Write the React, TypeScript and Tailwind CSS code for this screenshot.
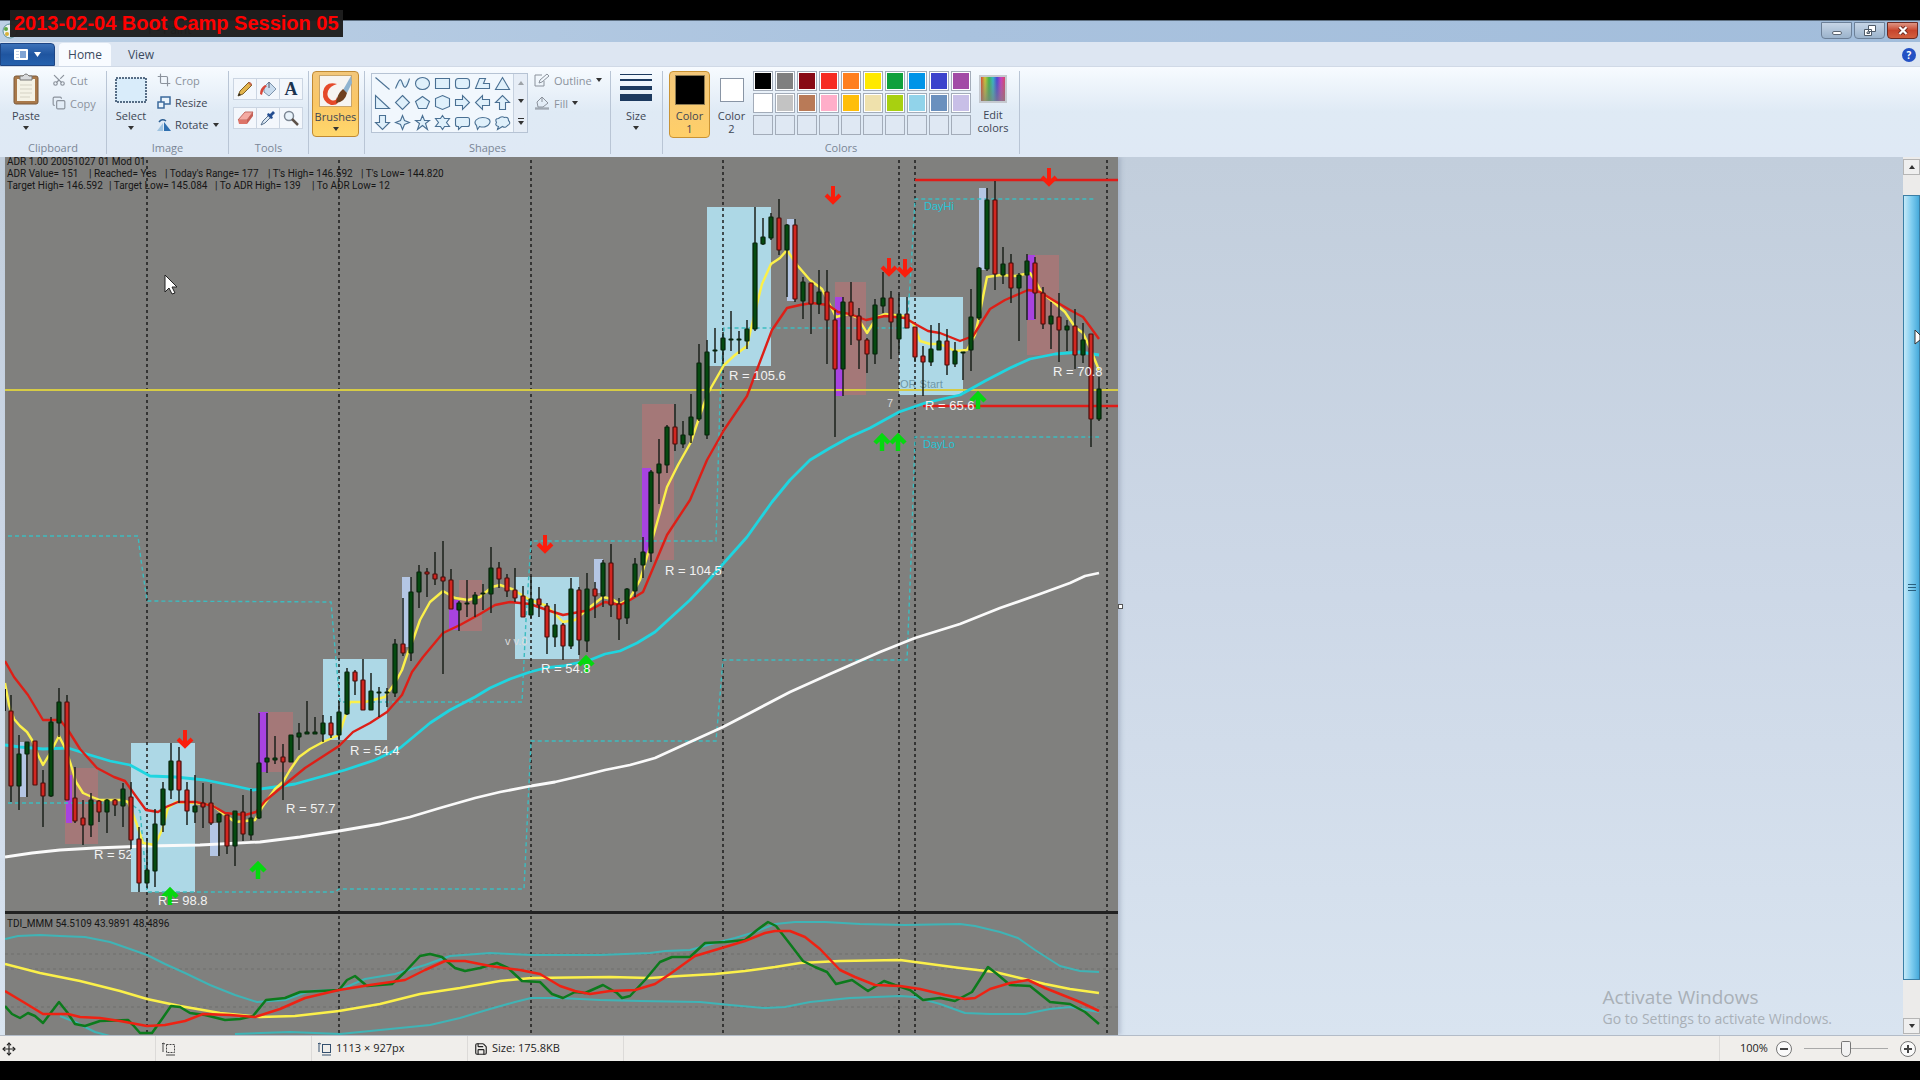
import type { ReactNode } from 'react';
import { Copy, Crop, Move, Save, Scissors } from 'lucide-react';

// [high, top, bottom, low, colour], one candle every 8px starting at x = 11
type Candle = [number, number, number, number, 'g' | 'r'];

const CANDLES: Candle[] = [
  [695, 711, 786, 802, 'r'], [735, 754, 786, 810, 'g'], [742, 742, 754, 797, 'g'], [741, 741, 785, 785, 'r'],
  [770, 783, 796, 827, 'r'], [717, 722, 796, 797, 'g'], [688, 702, 723, 737, 'g'], [695, 702, 800, 800, 'r'],
  [767, 798, 821, 823, 'r'], [800, 818, 825, 845, 'r'], [793, 800, 825, 837, 'g'], [800, 801, 812, 822, 'r'],
  [799, 800, 812, 833, 'g'], [799, 800, 805, 816, 'r'], [783, 789, 806, 827, 'g'], [782, 797, 840, 849, 'r'],
  [827, 839, 883, 892, 'r'], [838, 870, 883, 888, 'g'], [809, 824, 871, 887, 'g'], [782, 789, 825, 832, 'g'],
  [743, 761, 790, 799, 'g'], [747, 761, 790, 803, 'r'], [782, 790, 811, 825, 'r'], [775, 806, 812, 823, 'g'],
  [783, 803, 807, 828, 'r'], [784, 803, 823, 825, 'r'], [813, 814, 822, 856, 'g'], [815, 815, 846, 854, 'r'],
  [811, 811, 846, 866, 'g'], [795, 812, 834, 841, 'r'], [789, 818, 835, 840, 'g'], [713, 763, 818, 819, 'g'],
  [713, 758, 762, 773, 'g'], [736, 758, 760, 764, 'g'], [744, 757, 762, 800, 'r'], [735, 735, 762, 762, 'g'],
  [723, 733, 737, 750, 'g'], [701, 732, 734, 734, 'g'], [717, 732, 734, 734, 'g'], [715, 723, 734, 742, 'g'],
  [716, 723, 735, 738, 'r'], [701, 712, 735, 740, 'g'], [668, 672, 714, 715, 'g'], [670, 672, 681, 695, 'r'],
  [659, 680, 710, 710, 'r'], [673, 691, 710, 710, 'g'], [687, 692, 693, 717, 'g'], [688, 692, 693, 707, 'g'],
  [639, 644, 693, 697, 'g'], [598, 644, 653, 656, 'r'], [577, 592, 653, 661, 'g'], [565, 572, 592, 608, 'g'],
  [568, 572, 574, 597, 'r'], [552, 574, 579, 585, 'r'], [541, 577, 581, 674, 'r'], [569, 580, 609, 609, 'r'],
  [601, 603, 610, 631, 'g'], [580, 603, 604, 617, 'g'], [592, 595, 604, 617, 'g'], [584, 593, 594, 610, 'g'],
  [547, 568, 594, 613, 'g'], [562, 568, 579, 588, 'r'], [574, 578, 591, 597, 'r'], [568, 590, 598, 602, 'r'],
  [586, 596, 617, 617, 'r'], [576, 599, 615, 618, 'g'], [587, 599, 605, 617, 'r'], [603, 606, 637, 654, 'r'],
  [604, 625, 637, 647, 'g'], [623, 625, 646, 660, 'r'], [578, 589, 646, 649, 'g'], [587, 590, 640, 655, 'r'],
  [573, 589, 641, 652, 'g'], [582, 589, 596, 618, 'r'], [560, 563, 596, 607, 'g'], [544, 563, 605, 617, 'r'],
  [598, 604, 619, 640, 'r'], [588, 589, 618, 624, 'g'], [558, 564, 591, 597, 'g'], [537, 552, 565, 578, 'g'],
  [470, 472, 553, 562, 'g'], [439, 464, 473, 504, 'g'], [425, 427, 465, 473, 'g'], [404, 427, 444, 451, 'r'],
  [421, 435, 444, 448, 'g'], [394, 417, 435, 443, 'g'], [344, 363, 419, 421, 'g'], [340, 352, 435, 439, 'g'],
  [328, 350, 351, 363, 'g'], [332, 338, 350, 364, 'g'], [311, 339, 340, 351, 'g'], [331, 339, 340, 354, 'g'],
  [320, 329, 341, 349, 'g'], [207, 243, 329, 331, 'g'], [218, 237, 244, 245, 'g'], [213, 217, 238, 240, 'g'],
  [199, 218, 250, 255, 'r'], [224, 225, 250, 297, 'g'], [219, 225, 299, 302, 'r'], [277, 282, 301, 319, 'g'],
  [283, 283, 304, 334, 'r'], [270, 292, 304, 314, 'g'], [270, 292, 320, 364, 'r'], [310, 320, 369, 437, 'r'],
  [297, 302, 369, 396, 'g'], [282, 302, 316, 345, 'r'], [308, 316, 340, 369, 'r'], [338, 340, 354, 373, 'r'],
  [299, 305, 354, 364, 'g'], [272, 298, 306, 313, 'g'], [291, 298, 322, 359, 'r'], [294, 314, 339, 353, 'g'],
  [297, 314, 328, 328, 'r'], [327, 327, 357, 362, 'r'], [346, 356, 362, 396, 'r'], [325, 349, 362, 366, 'g'],
  [323, 341, 350, 350, 'g'], [329, 341, 365, 375, 'r'], [342, 351, 364, 367, 'g'], [352, 352, 353, 380, 'g'],
  [289, 317, 350, 371, 'g'], [267, 268, 318, 320, 'g'], [188, 200, 269, 271, 'g'], [181, 200, 274, 290, 'r'],
  [247, 264, 275, 284, 'g'], [254, 263, 288, 303, 'r'], [273, 275, 288, 341, 'g'], [254, 261, 275, 320, 'g'],
  [257, 263, 293, 319, 'r'], [287, 293, 324, 329, 'r'], [302, 316, 324, 349, 'g'], [293, 317, 330, 362, 'r'],
  [320, 326, 330, 351, 'g'], [309, 326, 355, 369, 'r'], [323, 340, 355, 363, 'g'], [334, 334, 419, 447, 'r'],
  [377, 389, 419, 421, 'g'],
];

// x, y, width, height, fill
const ZONES: [number, number, number, number, string][] = [
  [65, 768, 33, 76, '#a47878'], [267, 712, 26, 60, '#a47878'], [459, 580, 23, 51, '#a47878'],
  [642, 404, 32, 156, '#a47878'], [835, 282, 31, 113, '#a47878'], [1027, 255, 32, 100, '#a47878'],
  [131, 743, 64, 149, '#add8e6'], [323, 659, 64, 81, '#add8e6'], [515, 577, 64, 82, '#add8e6'],
  [707, 207, 64, 159, '#add8e6'], [899, 297, 64, 98, '#add8e6'],
  [20, 742, 6, 55, '#b4c6e4'], [210, 823, 8, 33, '#b4c6e4'], [402, 577, 9, 70, '#b4c6e4'],
  [594, 559, 9, 34, '#b4c6e4'], [787, 219, 8, 82, '#b4c6e4'], [979, 188, 8, 82, '#b4c6e4'],
  [66, 775, 6, 48, '#a843e0'], [259, 712, 9, 60, '#a843e0'], [449, 600, 10, 30, '#a843e0'],
  [642, 468, 9, 85, '#a843e0'], [835, 297, 8, 99, '#a843e0'], [1027, 255, 8, 65, '#a843e0'],
];

const DAY_LINES = [147, 339, 531, 723, 899, 915, 1107];

const DAY_HIGH =
  '8,536 138,536 141,560 147,601 331,602 336,660 340,702 522,702 526,620 531,541 716,541 720,400 724,328 907,328 911,270 915,199 1095,199';
const DAY_LOW = '8,803 130,803 140,811 145,865 147,892 335,892 339,889 524,889 531,741 716,741 723,660 907,660 911,560 915,437 1099,437';

const YELLOW_MA =
  '5,683 9,705 14,719 20,726 27,732 32,740 38,755 43,765 49,755 59,736 66,750 71,765 76,782 83,793 92,797 100,800 122,800 128,802 136,822 143,843 155,845 162,830 168,808 176,802 195,803 212,805 225,815 235,822 255,820 263,806 275,789 283,782 290,770 299,757 310,749 323,742 339,735 350,702 365,702 385,697 395,683 402,670 407,655 413,640 420,620 430,602 443,591 455,598 468,600 480,597 492,587 500,585 512,589 530,600 547,606 563,622 575,620 590,607 603,597 612,599 620,604 630,598 640,580 647,557 655,530 667,487 678,465 691,442 700,415 708,393 724,365 735,355 747,346 755,312 762,284 771,264 780,258 787,250 797,265 810,280 822,289 830,305 836,317 848,314 858,318 867,333 877,317 885,314 903,316 913,323 920,341 930,344 940,344 955,351 967,350 975,335 980,312 987,277 1001,275 1015,276 1030,273 1036,282 1042,293 1051,300 1065,312 1075,327 1083,333 1090,348 1099,370';
const RED_MA =
  '5,661 14,677 28,695 43,720 60,720 68,730 80,749 97,768 114,777 125,781 135,795 146,810 158,812 166,807 178,802 196,802 213,806 225,813 245,815 256,812 265,801 283,786 305,768 339,746 353,732 370,723 387,712 402,695 412,672 423,657 443,633 460,625 480,614 495,605 510,602 530,604 547,610 563,615 590,610 605,602 620,605 630,600 643,592 667,535 690,500 707,460 724,430 747,396 772,330 787,308 800,305 812,303 828,305 838,312 850,314 866,320 885,316 905,318 917,325 928,331 940,333 960,341 973,336 990,309 1005,300 1028,290 1040,292 1053,300 1070,310 1083,317 1099,339';
const CYAN_MA =
  '5,745 20,747 43,749 68,748 90,755 110,761 130,765 150,776 175,777 205,780 230,785 253,790 275,787 295,784 320,777 345,770 375,760 400,748 430,723 450,710 475,697 490,688 510,679 530,672 545,668 563,666 590,660 605,654 620,651 637,643 655,632 690,600 707,582 747,537 772,502 790,480 810,460 830,448 850,437 870,428 899,412 925,403 960,395 985,381 1010,368 1030,359 1055,354 1080,352 1099,355';
const WHITE_MA =
  '5,857 32,853 60,850 95,848 147,846 200,845 260,842 300,837 339,831 380,824 410,817 440,808 475,798 500,792 531,786 555,782 585,775 605,770 630,765 655,758 690,742 723,727 750,713 790,692 830,674 880,652 915,638 960,624 1000,608 1040,594 1070,583 1085,576 1099,573';

const TDI_UPPER =
  '5,939 18,936 40,935 60,936 85,937 110,942 130,949 147,955 165,964 185,973 210,985 235,995 257,1002 285,1000 310,991 339,990 365,979 395,974 425,965 450,956 490,953 510,954 531,955 600,955 650,953 665,951 690,950 715,943 735,938 755,932 775,924 795,922 825,922 860,924 905,925 960,924 975,926 1000,932 1018,938 1035,950 1060,966 1080,971 1099,972';
const TDI_LOWER_START = '60,1016 75,1022 95,1032 110,1036';
const TDI_LOWER =
  '235,1034 290,1032 340,1034 380,1030 430,1025 460,1018 490,1009 515,1002 531,998 560,998 600,1000 640,1001 700,1002 730,1005 765,1008 785,1007 810,1002 850,998 900,996 915,997 940,1004 965,1013 990,1014 1025,1014 1050,1009 1070,1007 1099,1012';
const TDI_YELLOW =
  '5,964 40,973 80,981 120,991 147,999 180,1006 220,1013 260,1017 295,1016 339,1011 380,1004 420,994 460,988 500,981 531,978 610,977 650,978 680,976 715,974 745,971 775,967 800,963 840,961 900,960 930,964 960,968 995,972 1020,978 1045,984 1070,989 1099,993';
const TDI_RED =
  '5,991 25,1003 43,1014 68,1014 80,1017 100,1018 120,1021 147,1026 165,1025 185,1021 203,1014 230,1015 255,1017 280,1009 305,998 339,990 370,985 405,980 425,970 445,961 465,961 490,966 520,970 540,974 560,986 575,991 590,994 610,991 635,990 655,984 670,974 695,956 715,950 745,941 765,933 775,931 790,931 805,937 820,949 840,970 855,977 875,985 900,986 920,989 945,995 965,999 975,998 990,989 1010,983 1028,980 1045,988 1060,994 1080,1002 1099,1011';
const TDI_GREEN =
  '5,1006 12,1014 20,1018 28,1013 35,1016 43,1023 59,1002 67,1012 75,1024 85,1026 100,1021 128,1020 133,1025 140,1033 152,1033 162,1019 171,1006 180,1007 190,1013 205,1015 225,1020 240,1019 253,1016 266,1000 285,998 300,992 320,991 339,990 347,980 355,976 367,986 392,984 405,972 420,956 430,954 442,957 455,968 465,971 480,968 497,963 508,968 522,981 540,982 552,994 563,998 575,992 585,993 603,985 617,993 622,998 630,996 645,980 660,962 672,957 690,957 705,943 725,942 745,940 757,930 768,922 776,926 790,944 803,961 815,967 827,972 836,984 852,980 868,991 884,981 895,985 910,990 923,1000 940,998 955,1001 972,992 988,967 997,974 1010,985 1030,986 1050,1002 1070,1004 1085,1012 1099,1024';

const RANGE_LABELS: [number, number, string][] = [
  [158, 905, 'R = 98.8'], [286, 813, 'R = 57.7'], [350, 755, 'R = 54.4'],
  [541, 673, 'R = 54.8'], [665, 575, 'R = 104.5'], [729, 380, 'R = 105.6'], [925, 410, 'R = 65.6'], [1053, 376, 'R = 70.8'],
];

const HEADER_TEXT: [number, number, string][] = [
  [7, 165, 'ADR 1.00 20051027 01 Mod 01'],
  [7, 177, 'ADR Value= 151'], [89, 177, '| Reached= Yes'], [165, 177, "| Today's Range= 177"],
  [268, 177, "| T's High= 146.592"], [361, 177, "| T's Low= 144.820"],
  [7, 189, 'Target High= 146.592'], [109, 189, '| Target Low= 145.084'],
  [215, 189, '| To ADR High= 139'], [312, 189, '| To ADR Low= 12'],
  [7, 927, 'TDI_MMM 54.5109 43.9891 48.4896'],
];

const SELL_ARROWS: [number, number][] = [[185, 749], [545, 554], [833, 205], [889, 277], [905, 278], [1049, 187]];
const BUY_ARROWS: [number, number][] = [[258, 860], [170, 886], [586, 654], [882, 432], [898, 432], [978, 390]];

function Chart() {
  return (
    <svg width="1113" height="927" viewBox="5 157 1113 927" className="block shrink-0" role="img" aria-label="Price chart">
      <rect x="5" y="157" width="1113" height="927" fill="#80807e" />
      <g fontFamily="'Liberation Sans', Arial, sans-serif" fontSize="13" fill="#f2f2f2">
        <text x="94" y="859">R = 52</text>
      </g>
      {ZONES.map(([x, y, w, h, fill]) => (
        <rect key={`${x}-${y}`} x={x} y={y} width={w} height={h} fill={fill} />
      ))}
      <g fontFamily="'Liberation Sans', Arial, sans-serif" fontSize="11">
        <text x="900" y="388" fill="#6f97a6">OR Start</text>
        <text x="924" y="210" fill="#25c4d6">DayHi</text>
        <text x="923" y="448" fill="#25c4d6">DayLo</text>
        <text x="505" y="645" fill="#dcdcdc">v v.8</text>
        <text x="887" y="407" fill="#dcdcdc">7</text>
      </g>

      <g stroke="#1c1c1c" strokeWidth="1.5" strokeDasharray="3 3">
        {DAY_LINES.map((x) => (
          <line key={x} x1={x} y1="160" x2={x} y2="1084" />
        ))}
      </g>
      <g fill="none" stroke="#3cbcc0" strokeWidth="1.4" strokeDasharray="4 3">
        <polyline points={DAY_HIGH} />
        <polyline points={DAY_LOW} />
      </g>
      <line x1="5" y1="390" x2="1118" y2="390" stroke="#d6cb45" strokeWidth="2" />
      <g stroke="#e01c18" strokeWidth="2.5">
        <line x1="915" y1="180" x2="1118" y2="180" />
        <line x1="923" y1="406" x2="1118" y2="406" />
      </g>

      <g fill="none" strokeLinejoin="round" strokeWidth="2.4">
        <polyline points={WHITE_MA} stroke="#fafafa" strokeWidth="2.8" />
        <polyline points={CYAN_MA} stroke="#1fd5e0" strokeWidth="2.8" />
        <polyline points={YELLOW_MA} stroke="#fbf04a" />
        <polyline points={RED_MA} stroke="#dd1f17" />
      </g>

      <line x1="5" y1="689" x2="5" y2="711" stroke="#1a1a1a" strokeWidth="2" />
      {CANDLES.map(([high, top, bottom, low, color], i) => {
        const x = 11 + i * 8;
        return (
          <g key={x}>
            <line x1={x} y1={high} x2={x} y2={low} stroke="#1b201b" strokeWidth="1.5" />
            <rect
              x={x - 2}
              y={top}
              width="4"
              height={Math.max(bottom - top, 1)}
              rx="0.5"
              fill={color === 'g' ? '#054a10' : '#d22620'}
              stroke={color === 'g' ? '#06220a' : '#4a0d0a'}
              strokeWidth="1.2"
            />
          </g>
        );
      })}

      <g fill="none" strokeWidth="4">
        {SELL_ARROWS.map(([x, y]) => (
          <path key={x} stroke="#fb1d0c" d={`M${x} ${y - 19}V${y - 3}M${x - 7} ${y - 10}L${x} ${y - 3}L${x + 7} ${y - 10}`} />
        ))}
        {BUY_ARROWS.map(([x, y]) => (
          <path key={x} stroke="#05d80f" strokeWidth="4.5" d={`M${x} ${y + 19}V${y + 4}M${x - 7} ${y + 11}L${x} ${y + 4}L${x + 7} ${y + 11}`} />
        ))}
      </g>
      <g fontFamily="'Liberation Sans', Arial, sans-serif" fontSize="13" fill="#f2f2f2">
        {RANGE_LABELS.map(([x, y, label]) => (
          <text key={label} x={x} y={y}>{label}</text>
        ))}
      </g>

      {/* TDI panel */}
      <rect x="5" y="911" width="1113" height="3" fill="#222" />
      <g stroke="#6f6f6d" strokeWidth="1" strokeDasharray="3 3">
        <line x1="5" y1="954" x2="1118" y2="954" />
        <line x1="5" y1="969" x2="1118" y2="969" />
        <line x1="5" y1="1007" x2="1118" y2="1007" />
      </g>
      <g fill="none" strokeLinejoin="round" strokeWidth="2.5">
        <polyline points={TDI_UPPER} stroke="#3fb4b6" strokeWidth="2" />
        <polyline points={TDI_LOWER_START} stroke="#3fb4b6" strokeWidth="2" />
        <polyline points={TDI_LOWER} stroke="#3fb4b6" strokeWidth="2" />
        <polyline points={TDI_YELLOW} stroke="#fbf04a" />
        <polyline points={TDI_GREEN} stroke="#0c7a1c" />
        <polyline points={TDI_RED} stroke="#ee2213" />
      </g>
      <g fontFamily="Roboto, 'Open Sans', sans-serif" fontSize="10" fill="#161616">
        {HEADER_TEXT.map(([x, y, label]) => (
          <text key={label} x={x} y={y}>{label}</text>
        ))}
      </g>

      <path d="M165 275V292L169 288L172 294L175 293L172 287H177Z" fill="#fff" stroke="#222" strokeWidth="1" />
    </svg>
  );
}

function Caret() {
  return (
    <svg width="6" height="4" viewBox="0 0 6 4" fill="#333">
      <path d="M0 0H6L3 4Z" />
    </svg>
  );
}

function Group({ label, className, children }: { label: string; className: string; children: ReactNode }) {
  return (
    <section className={`flex shrink-0 flex-col border-r border-[#b9c5d5] ${className}`}>
      <div className="flex h-[71px] shrink-0 items-start">{children}</div>
      <h2 className="h-3 shrink-0 text-center leading-3 text-[#7a8696]">{label}</h2>
    </section>
  );
}

const SHAPES = [
  'M-7 -6L7 6',
  'M-7 5C-3 -5 -2 -6 0 0S4 5 7 -5',
  'M-7 0A7 6 0 1 0 7 0A7 6 0 1 0 -7 0Z',
  'M-7 -5H7V5H-7Z',
  'M-4 -5H4Q7 -5 7 -2V2Q7 5 4 5H-4Q-7 5 -7 2V-2Q-7 -5 -4 -5Z',
  'M-7 5L-3 -5H3L1 0H7V5Z',
  'M0 -6L7 6H-7Z',
  'M-7 -7V6H7Z',
  'M0 -7L7 0L0 7L-7 0Z',
  'M0 -6L7 -1L4 6H-4L-7 -1Z',
  'M0 -7L7 -4V4L0 7L-7 4V-4Z',
  'M-7 -3H0V-7L7 0L0 7V3H-7Z',
  'M7 -3H0V-7L-7 0L0 7V3H7Z',
  'M-3 7V0H-7L0 -7L7 0H3V7Z',
  'M-3 -7V0H-7L0 7L7 0H3V-7Z',
  'M0 -7L2 -2L7 0L2 2L0 7L-2 2L-7 0L-2 -2Z',
  'M0 -7L2 -2H7L3 1L5 7L0 3L-5 7L-3 1L-7 -2H-2Z',
  'M0 -7L2 -4H7L4 0L7 4H2L0 7L-2 4H-7L-4 0L-7 -4H-2Z',
  'M-5 -5H5Q7 -5 7 -3V2Q7 4 5 4H-1L-4 7V4H-5Q-7 4 -7 2V-3Q-7 -5 -5 -5Z',
  'M-3 4L-5 7L-6 3C-10 -1 -5 -5 0 -5S9 -3 7 1S0 5 -3 4Z',
  'M-4 4Q-8 3 -6 0Q-8 -4 -4 -4Q-1 -7 2 -5Q6 -6 6 -2Q9 1 5 3Q3 6 0 4L-5 7Z',
];

const PALETTE = [
  ['black', 'bg-black'], ['gray', 'bg-[#7f7f7f]'], ['dark red', 'bg-[#880a15]'], ['red', 'bg-[#f62b22]'], ['orange', 'bg-[#ff7f1e]'],
  ['yellow', 'bg-[#ffe900]'], ['green', 'bg-[#0fa03c]'], ['turquoise', 'bg-[#0094e8]'], ['indigo', 'bg-[#3c43cc]'], ['purple', 'bg-[#a24ba6]'],
  ['white', 'bg-white'], ['light gray', 'bg-[#c3c3c3]'], ['brown', 'bg-[#b97a57]'], ['rose', 'bg-[#ffaec9]'], ['gold', 'bg-[#ffbe09]'],
  ['light yellow', 'bg-[#efe1ac]'], ['lime', 'bg-[#a8d010]'], ['light turquoise', 'bg-[#91d3ea]'], ['blue-gray', 'bg-[#6a90be]'], ['lavender', 'bg-[#c8bfe7]'],
];

function Ribbon() {
  return (
    <div className="flex h-[91px] shrink-0 items-start overflow-hidden border-t border-[#d0d9e6] bg-linear-to-b from-[#f7fbff] via-[#dfeaf5] to-[#dfe9f5] pt-1 text-[11px] leading-[13px] text-[#3d4654]">
      <Group label="Clipboard" className="w-[107px]">
        <button className="flex w-[52px] flex-col items-center">
          <svg width="26" height="32" viewBox="0 0 26 32" className="mt-0.5">
            <rect x="1" y="3" width="24" height="28" rx="2" fill="#a9794a" stroke="#7c5a3a" />
            <path d="M4 6H22V28H4Z" fill="#f4f2e6" />
            <path d="M7 12H19M7 16H19M7 20H19M7 24H17" stroke="#d5d2c4" />
            <path d="M7 3H10Q13 -1 16 3H19V7H7Z" fill="#d8dadd" stroke="#777" />
          </svg>
          <span className="pt-1">Paste</span>
          <span className="pt-1"><Caret /></span>
        </button>
        <div className="flex flex-col gap-[9px] pt-0.5 text-[#8b929c]">
          <button disabled className="flex items-center gap-1"><Scissors className="size-3.5 -rotate-90" />Cut</button>
          <button disabled className="flex items-center gap-1"><Copy className="size-3.5" />Copy</button>
        </div>
      </Group>

      <Group label="Image" className="w-[122px]">
        <button className="flex w-[48px] flex-col items-center">
          <svg width="32" height="32" viewBox="0 0 32 32" className="mt-0.5">
            <rect x="1" y="5" width="30" height="24" fill="#d9ecfa" stroke="#28415f" strokeWidth="1.5" strokeDasharray="2 1" />
          </svg>
          <span className="pt-1">Select</span>
          <span className="pt-1"><Caret /></span>
        </button>
        <div className="flex flex-col gap-[9px] pt-0.5 pl-0.5">
          <button disabled className="flex items-center gap-1 text-[#8b929c]"><Crop className="size-3.5" />Crop</button>
          <button className="flex items-center gap-1">
            <svg width="14" height="13" viewBox="0 0 14 13" fill="#eaf4fc" stroke="#3c6a9c" strokeWidth="1.5">
              <path d="M4 1H13V8H4Z" />
              <path d="M1 6H7V12H1Z" />
            </svg>
            Resize
          </button>
          <button className="flex items-center gap-1">
            <svg width="14" height="13" viewBox="0 0 14 13">
              <path d="M7 4L14 13H7Z" fill="#2e6fb0" />
              <path d="M6 5V13H0Z" fill="#9fc3e0" />
              <path d="M2 4Q5 0 9 3" fill="none" stroke="#2d5f93" strokeWidth="1.5" />
            </svg>
            Rotate
            <Caret />
          </button>
        </div>
      </Group>

      <Group label="Tools" className="w-[80px]">
        <div className="ml-1 flex flex-col gap-[7px] pt-[7px]">
          <div className="flex h-[22px] w-[70px] divide-x divide-[#cbd5e2] border border-[#cbd5e2] bg-[#f3f7fc]">
            <button aria-label="Pencil" className="flex flex-1 items-center justify-center">
              <svg width="16" height="16" viewBox="0 0 16 16">
                <path d="M1 15L3 10L12 1L15 4L6 13Z" fill="#e2b44c" stroke="#7d6128" />
                <path d="M1 15L2 12L4 14Z" fill="#222" />
                <path d="M11 2L14 5L15 3L13 1Z" fill="#c76b4f" />
              </svg>
            </button>
            <button aria-label="Fill with color" className="flex flex-1 items-center justify-center">
              <svg width="18" height="16" viewBox="0 0 18 16">
                <path d="M5 6L10 1L17 8L10 15L5 11Z" fill="#c9dcee" stroke="#7d93ab" />
                <path d="M1 13Q1 7 6 4L8 5Q4 8 3 14Z" fill="#d8483a" />
                <path d="M10 1V7" stroke="#556" />
              </svg>
            </button>
            <button aria-label="Text" className="flex-1 text-center font-['Liberation_Serif',serif] text-lg leading-5 font-bold text-[#1c3450]">A</button>
          </div>
          <div className="flex h-[22px] w-[70px] divide-x divide-[#cbd5e2] border border-[#cbd5e2] bg-[#f3f7fc]">
            <button aria-label="Eraser" className="flex flex-1 items-center justify-center">
              <svg width="17" height="14" viewBox="0 0 17 14">
                <path d="M1 9L8 1H16L10 9Z" fill="#f4aaa2" stroke="#c16a62" />
                <path d="M1 9H10V13H2Z" fill="#dd7468" />
                <path d="M10 9L16 1V5L10 13Z" fill="#c65f55" />
              </svg>
            </button>
            <button aria-label="Color picker" className="flex flex-1 items-center justify-center">
              <svg width="16" height="16" viewBox="0 0 16 16">
                <path d="M1 15L3 11L9 5L11 7L5 13Z" fill="#dce8f3" stroke="#56708d" />
                <path d="M8 3L10 4L13 1L15 3L12 6L13 8L11 9L7 5Z" fill="#264f91" />
              </svg>
            </button>
            <button aria-label="Magnifier" className="flex flex-1 items-center justify-center">
              <svg width="16" height="16" viewBox="0 0 16 16">
                <circle cx="6" cy="6" r="4.5" fill="#e9f3fb" stroke="#7c8794" strokeWidth="1.5" />
                <path d="M9 9L15 15" stroke="#5d5149" strokeWidth="2.5" />
              </svg>
            </button>
          </div>
        </div>
      </Group>

      <Group label="" className="w-[56px]">
        <button className="ml-[3px] flex h-[66px] w-[47px] flex-col items-center rounded-sm border border-[#c08a34] bg-linear-to-b from-[#f3c77a] via-[#fbc765] to-[#ffd76c]">
          <svg width="33" height="32" viewBox="0 0 33 32" className="mt-[3px]">
            <rect x="0.500" y="0.500" width="32" height="31" fill="#f6f4f2" stroke="#c9a56b" />
            <path d="M18 9Q6 6 4 17Q3 27 12 30Q22 31 18 22Q17 27 12 25Q7 22 9 16Q11 11 18 9Z" fill="#e5492a" />
            <path d="M32 1L24 15L28 18L33 8Z" fill="#8fb3d0" />
            <path d="M24 14L28 18Q26 27 17 28Q18 19 24 14Z" fill="#70401f" />
          </svg>
          <span className="pt-[3px]">Brushes</span>
          <span className="pt-1"><Caret /></span>
        </button>
      </Group>

      <Group label="Shapes" className="w-[246px]">
        <div className="mt-0.5 ml-1.5 flex h-[60px] w-[157px] shrink-0 border border-[#b6c3d4] bg-[#f1f7fd]">
          <div className="grid w-[141px] grid-cols-7">
            {SHAPES.map((d) => (
              <button key={d} aria-label="Shape" className="flex items-center justify-center">
                <svg width="17" height="17" viewBox="-8.500 -8.500 17 17" fill="#dff0fb" stroke="#4a7093" strokeWidth="1.1">
                  <path d={d} />
                </svg>
              </button>
            ))}
          </div>
          <div className="flex flex-1 flex-col items-center justify-around border-l border-[#c6d1df] bg-[#e6edf6]">
            <button aria-label="Scroll up" className="rotate-180 opacity-40"><Caret /></button>
            <button aria-label="Scroll down"><Caret /></button>
            <button aria-label="More shapes" className="border-t border-[#333] pt-0.5"><Caret /></button>
          </div>
        </div>
        <div className="ml-1.5 flex flex-col gap-[9px] pt-0.5 text-[#8b929c]">
          <button disabled className="flex items-center gap-1">
            <svg width="16" height="14" viewBox="0 0 16 14" fill="none" stroke="currentColor">
              <path d="M8 2H1V13H10V8M5 10L6 7L13 1L15 3L8 9Z" />
            </svg>
            Outline <Caret />
          </button>
          <button disabled className="flex items-center gap-1">
            <svg width="16" height="14" viewBox="0 0 16 14" fill="none" stroke="currentColor">
              <path d="M3 6L8 1L14 7L9 11H4ZM1 12H15M1 13H15M8 1V6" />
            </svg>
            Fill <Caret />
          </button>
        </div>
      </Group>

      <Group label="" className="w-[52px]">
        <button className="flex w-[50px] flex-col items-center">
          <svg width="32" height="32" viewBox="0 0 32 32" fill="#1d3a5f" className="mt-0.5">
            <path d="M0 1H32V2H0ZM0 6H32V8H0ZM0 13H32V17H0ZM0 21H32V28H0Z" />
          </svg>
          <span className="pt-1">Size</span>
          <span className="pt-1"><Caret /></span>
        </button>
      </Group>

      <Group label="Colors" className="w-[357px]">
        <button className="ml-1.5 flex h-[67px] w-[41px] shrink-0 flex-col items-center rounded-sm border border-[#c99334] bg-linear-to-b from-[#f3c77a] to-[#ffcf68]">
          <span className="mt-[3px] size-[30px] shrink-0 border border-[#8c7a52] bg-black" />
          <span className="pt-1">Color<br />1</span>
        </button>
        <button className="flex w-[43px] shrink-0 flex-col items-center">
          <span className="mt-[7px] mb-1 size-6 border border-[#8995a5] bg-white" />
          <span className="pt-[3px]">Color<br />2</span>
        </button>
        <div className="grid w-[220px] shrink-0 grid-cols-10 content-start gap-y-0.5">
          {PALETTE.map(([name, color]) => (
            <button key={name} aria-label={name} className={`size-5 border border-[#a3acb9] ring-1 ring-white ring-inset ${color}`} />
          ))}
          {Array.from({ length: 10 }, (_, i) => (
            <button key={i} aria-label="Custom color" className="size-5 border border-[#a3acb9] bg-[#dfe8f3]" />
          ))}
        </div>
        <button className="flex w-[40px] shrink-0 flex-col items-center">
          <span className="mt-1 flex size-[28px] border-2 border-[#c5c9cf] bg-[linear-gradient(to_right,#d84a30,#c9c83a,#3fb54a,#35b7c9,#4a45d8,#c93fc2,#d84868)]">
            <span className="flex-1 bg-linear-to-b from-transparent to-[#808080]/70" />
          </span>
          <span className="pt-[5px]">Edit<br />colors</span>
        </button>
      </Group>
    </div>
  );
}

function StatusBar() {
  return (
    <footer className="flex h-[26px] shrink-0 items-center border-t border-[#b3bcc8] bg-[#f0eeeb] text-[11px] text-[#222]">
      <div className="flex h-full w-[156px] items-center border-r border-[#dcdad8] pl-0.5">
        <Move className="size-3.5" />
      </div>
      <div className="flex h-full w-[156px] items-center border-r border-[#dcdad8] pl-1.5">
        <svg width="14" height="14" viewBox="0 0 14 14" fill="none" stroke="#444">
          <path d="M1 1V10M0 2L1 1L3 2M4 13H13" />
          <rect x="4.500" y="2.500" width="8" height="8" strokeDasharray="2 1" />
        </svg>
      </div>
      <div className="flex h-full w-[156px] items-center gap-1 border-r border-[#dcdad8] pl-1.5">
        <svg width="14" height="14" viewBox="0 0 14 14" fill="none" stroke="#34506e">
          <path d="M1 1V10M0 2L1 1L3 2M4 13H13" />
          <rect x="4.500" y="2.500" width="8" height="8" />
        </svg>
        1113 × 927px
      </div>
      <div className="flex h-full w-[156px] items-center gap-1 border-r border-[#dcdad8] pl-1.5">
        <Save className="size-3.5" />
        Size: 175.8KB
      </div>
      <div className="ml-auto flex h-full items-center border-l border-[#dcdad8] pr-1 pl-5">
        <label htmlFor="zoom" className="w-[36px]">100%</label>
        <button aria-label="Zoom out" className="flex size-4 items-center justify-center rounded-full border border-[#777] bg-[#fafafa]">
          <span className="h-0.5 w-2 bg-[#444]" />
        </button>
        <input
          id="zoom"
          type="range"
          defaultValue={50}
          className="mx-3 h-4 w-[84px] appearance-none bg-[linear-gradient(#a9a9a9,#a9a9a9)] bg-size-[100%_1px] bg-center bg-no-repeat [&::-webkit-slider-thumb]:h-4 [&::-webkit-slider-thumb]:w-2.5 [&::-webkit-slider-thumb]:appearance-none [&::-webkit-slider-thumb]:rounded-t-xs [&::-webkit-slider-thumb]:rounded-b-md [&::-webkit-slider-thumb]:border [&::-webkit-slider-thumb]:border-[#777] [&::-webkit-slider-thumb]:bg-[#f2f2f2]"
        />
        <button aria-label="Zoom in" className="relative flex size-4 items-center justify-center rounded-full border border-[#777] bg-[#fafafa]">
          <span className="h-0.5 w-2 bg-[#444]" />
          <span className="absolute h-2 w-0.5 bg-[#444]" />
        </button>
      </div>
    </footer>
  );
}

export default function App() {
  return (
    <div className="relative flex h-screen flex-col overflow-hidden bg-black pt-5 pb-[19px] font-['Open_Sans','Noto_Sans',sans-serif]">
      <header className="flex h-[22px] shrink-0 items-start justify-between border-t border-[#5f7183] bg-linear-to-r from-[#bcd0e5] via-[#a9c2de] to-[#a2bddb]">
        <div className="flex items-center pl-0.5 text-[12px] text-[#222]">
          <svg width="16" height="16" viewBox="0 0 16 16" className="mt-0.5">
            <circle cx="8" cy="8" r="7" fill="#eef3f0" stroke="#5b8f9a" />
            <circle cx="4" cy="6" r="2" fill="#5aa845" />
            <circle cx="5" cy="11" r="2" fill="#d8b23a" />
          </svg>
          <h1 className="pl-32">1 - Paint</h1>
        </div>
        <div className="flex gap-0.5 pt-px pr-0.5">
          <button aria-label="Minimize" className="flex h-[17px] w-[31px] items-center justify-center rounded-b-sm border border-[#6c8098] bg-linear-to-b from-[#c6d5e6] to-[#9bb3cc]">
            <span className="mt-1 h-1 w-2.5 rounded-xs border border-[#5b6673] bg-white" />
          </button>
          <button aria-label="Restore" className="flex h-[17px] w-[31px] items-center justify-center rounded-b-sm border border-[#6c8098] bg-linear-to-b from-[#c6d5e6] to-[#9bb3cc]">
            <svg width="12" height="11" viewBox="0 0 12 11" fill="#fff" stroke="#4f5b69">
              <path d="M4.500 0.500H11.500V6.500H4.500ZM0.500 4.500H7.500V10.500H0.500ZM3 7H5.500V8.500H3Z" />
            </svg>
          </button>
          <button aria-label="Close" className="flex h-[17px] w-[31px] items-center justify-center rounded-b-sm border border-[#6b2a22] bg-linear-to-b from-[#dd9483] via-[#c8452c] to-[#d2603f]">
            <svg width="10" height="9" viewBox="0 0 10 9">
              <path d="M1.500 1L8.500 8M8.500 1L1.500 8" stroke="#6b2a22" strokeWidth="4" />
              <path d="M1.500 1L8.500 8M8.500 1L1.500 8" stroke="#fff" strokeWidth="2.200" />
            </svg>
          </button>
        </div>
      </header>

      <nav className="flex h-6 shrink-0 items-end bg-[#dde6f2] text-[12px] text-[#3a4a60]">
        <button aria-label="Paint menu" className="flex h-[23px] w-[55px] items-center justify-center gap-1.5 rounded-tr-sm border border-[#1d4584] bg-linear-to-b from-[#3c72b8] via-[#1f55a0] to-[#2561ad]">
          <svg width="14" height="11" viewBox="0 0 14 11">
            <rect width="14" height="11" rx="1" fill="#fff" />
            <path d="M6 2H12V9H6Z" fill="#7fa3d3" />
            <path d="M2 2.500H5M2 5.500H5M2 8.500H5" stroke="#c5d3e6" />
          </svg>
          <svg width="7" height="5" viewBox="0 0 7 5" fill="#fff"><path d="M0 0H7L3.500 5Z" /></svg>
        </button>
        <button className="ml-1 h-[23px] w-[52px] rounded-t-sm bg-[#f8fbff]">Home</button>
        <button className="h-[23px] w-[60px]">View</button>
        <button aria-label="Help" className="mr-1 mb-1 ml-auto size-3.5 rounded-full bg-[#2451c4] text-[10px] leading-3.5 font-bold text-white">?</button>
      </nav>

      <Ribbon />

      <main className="relative flex min-h-0 flex-1 overflow-hidden bg-linear-to-b from-[#c2cedc] via-[#cdd8e7] to-[#d9e4f0]">
        <div className="w-[5px] shrink-0" />
        <div className="shadow-[3px_0_4px_rgba(120,135,160,0.35)]">
          <Chart />
        </div>
        <span className="mt-[447px] size-[5px] shrink-0 border border-[#555] bg-white" />
        <div className="absolute right-[88px] bottom-1.5 text-[#a9b0b7]">
          <p className="text-[19px] leading-6">Activate Windows</p>
          <p className="text-[14px] leading-5">Go to Settings to activate Windows.</p>
        </div>

        <div className="ml-auto flex w-[17px] flex-col bg-[#ecebea] pt-0.5">
          <button aria-label="Scroll up" className="flex h-4 items-center justify-center border border-[#b5b5b5] bg-[#efefef]">
            <span className="rotate-180"><Caret /></span>
          </button>
          <div className="mt-5 mb-[38px] flex flex-1 flex-col items-center justify-center gap-0.5 border border-[#3b7fa6] bg-linear-to-r from-[#c4e9f8] via-[#7fcdf0] to-[#45aadb]">
            <span className="h-px w-2 bg-[#2a5f7e]" />
            <span className="h-px w-2 bg-[#2a5f7e]" />
            <span className="h-px w-2 bg-[#2a5f7e]" />
          </div>
          <button aria-label="Scroll down" className="mb-px flex h-4 items-center justify-center border border-[#b5b5b5] bg-[#efefef]">
            <Caret />
          </button>
        </div>
        {/* second pointer, cut by the window edge */}
        <svg width="6" height="18" viewBox="0 0 6 18" className="absolute top-[172px] right-0">
          <path d="M1 1V15L6 11V6Z" fill="#fff" stroke="#333" />
        </svg>
      </main>

      <StatusBar />

      <div className="absolute top-2.5 left-2.5 bg-[#1e1e1e]/97 px-1 font-['Liberation_Sans',Arial,sans-serif] text-[20px] leading-[27px] font-bold whitespace-nowrap text-[#ff0000]">
        2013-02-04 Boot Camp Session 05
      </div>
    </div>
  );
}
